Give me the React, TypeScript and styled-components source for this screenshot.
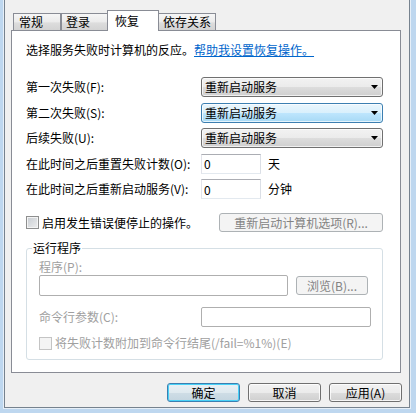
import React from 'react';
import styled, { createGlobalStyle, css } from 'styled-components';

const GlobalStyle = createGlobalStyle`
  html, body {
    margin: 0;
    padding: 0;
  }
  body {
    font: 12px "Noto Sans CJK SC", "Liberation Sans", sans-serif;
    color: #000;
    background: #bed7ef;
  }
`;

const tabs = [
  { label: '常规', width: 48, pad: 5 },
  { label: '登录', width: 47, pad: 4 },
  { label: '恢复', width: 52, pad: 7, active: true },
  { label: '依存关系', width: 58, pad: 4 },
];

const failures = [
  { label: '第一次失败(F):', value: '重新启动服务' },
  { label: '第二次失败(S):', value: '重新启动服务', focus: true },
  { label: '后续失败(U):', value: '重新启动服务' },
];

const Arrow = () => (
  <svg width="7" height="4" viewBox="0 0 7 4">
    <polygon points="0,0 7,0 3.5,4" fill="#000" />
  </svg>
);

export default function App() {
  return (
    <Frame>
      <GlobalStyle />
      <Dialog>
        <TabStrip>
          {tabs.map((t) => (
            <Tab key={t.label} $w={t.width} $pl={t.pad} $active={t.active}>
              {t.label}
            </Tab>
          ))}
        </TabStrip>
        <Panel>
          <Intro>
            选择服务失败时计算机的反应。<HelpLink href="#">帮助我设置恢复操作。</HelpLink>
          </Intro>

          <Form>
            {failures.map((f) => (
              <React.Fragment key={f.label}>
                <Label>{f.label}</Label>
                <Combo $focus={f.focus}>
                  <span>{f.value}</span>
                  <Arrow />
                </Combo>
              </React.Fragment>
            ))}
            <Label>在此时间之后重置失败计数(O):</Label>
            <Inline>
              <NumberBox readOnly value="0" />
              <Unit>天</Unit>
            </Inline>
            <Label>在此时间之后重新启动服务(V):</Label>
            <Inline>
              <NumberBox readOnly value="0" />
              <Unit>分钟</Unit>
            </Inline>
          </Form>

          <StopRow>
            <CheckLabel>
              <CheckBox />
              启用发生错误便停止的操作。
            </CheckLabel>
            <PushButton $w={164} disabled>
              重新启动计算机选项(R)...
            </PushButton>
          </StopRow>

          <Group>
            <Legend>运行程序</Legend>
            <Label $disabled>程序(P):</Label>
            <ProgramRow>
              <TextBox disabled $w={249} $h={21} />
              <PushButton $w={72} disabled>
                浏览(B)...
              </PushButton>
            </ProgramRow>
            <ParamRow>
              <Label $disabled>命令行参数(C):</Label>
              <TextBox disabled $h={20} />
            </ParamRow>
            <CheckLabel $disabled $inset>
              <CheckBox $disabled />
              将失败计数附加到命令行结尾(/fail=%1%)(E)
            </CheckLabel>
          </Group>
        </Panel>

        <ButtonBar>
          <PushButton $default>确定</PushButton>
          <PushButton>取消</PushButton>
          <PushButton>应用(A)</PushButton>
        </ButtonBar>
      </Dialog>
    </Frame>
  );
}

const Frame = styled.div`
  width: 416px;
  height: 413px;
  box-sizing: border-box;
  padding: 0 6px 5px 4px;
  background: #bed7ef;
`;

const Dialog = styled.div`
  height: 100%;
  box-sizing: border-box;
  background: #f0f0f0;
  border: 1px solid #76828e;
  border-top: 0;
  box-shadow: 0 0 0 1px #e6eff8;
  padding: 10px 0 5px;
  display: flex;
  flex-direction: column;
`;

const TabStrip = styled.div`
  display: flex;
  align-items: flex-end;
  height: 20px;
  margin-left: 8px;
`;

const Tab = styled.div<{ $w: number; $pl: number; $active?: boolean }>`
  box-sizing: border-box;
  width: ${({ $w }) => $w}px;
  height: 17px;
  padding-left: ${({ $pl }) => $pl}px;
  border: 1px solid #898c95;
  border-bottom: 0;
  line-height: 16px;
  white-space: nowrap;
  background: linear-gradient(#f6f6f6, #ebebeb 50%, #dddddd 55%, #d3d3d3);

  ${({ $active }) =>
    $active &&
    css`
      position: relative;
      z-index: 1;
      height: 21px;
      margin: 0 -1px -1px;
      padding-top: 2px;
      background: #fff;
    `}
`;

const Panel = styled.div`
  margin: 0 8px 0 6px;
  background: #fff;
  border: 1px solid #898c95;
  padding: 11px 17px 12px 14px;
`;

const Intro = styled.div`
  line-height: 16px;
  white-space: nowrap;
`;

const HelpLink = styled.a`
  color: #0066cc;
  text-decoration: underline;
`;

const Form = styled.div`
  margin-top: 19px;
  display: grid;
  grid-template-columns: 175px 182px;
  grid-auto-rows: 20px;
  row-gap: 5.5px;
  align-items: center;
`;

const Label = styled.div<{ $disabled?: boolean }>`
  line-height: 14px;
  white-space: nowrap;
  color: ${({ $disabled }) => ($disabled ? '#a0a0a0' : '#000')};
`;

const Combo = styled.div<{ $focus?: boolean }>`
  box-sizing: border-box;
  height: 20px;
  display: flex;
  align-items: center;
  justify-content: space-between;
  padding: 0 4px 0 3px;
  border: 1px solid #707070;
  border-radius: 3px;
  line-height: 18px;
  background: linear-gradient(#f2f2f2, #ebebeb 50%, #dddddd 50%, #cfcfcf);
  box-shadow: inset 0 0 0 1px rgba(255, 255, 255, 0.7);

  ${({ $focus }) =>
    $focus &&
    css`
      border-color: #3c7fb1;
      background: linear-gradient(#eaf6fd, #d9f0fc 50%, #bee6fd 50%, #a7d9f5);
    `}
`;

const Inline = styled.div`
  display: flex;
  align-items: center;
`;

const NumberBox = styled.input`
  box-sizing: border-box;
  width: 60px;
  height: 20px;
  margin: 0;
  padding: 0 2px;
  border: 1px solid;
  border-color: #abadb3 #dbdfe6 #e3e9ef #e2e3ea;
  font: inherit;
  line-height: 18px;
  outline: none;
  background: #fff;
`;

const Unit = styled.span`
  margin-left: 7px;
  line-height: 14px;
`;

const StopRow = styled.div`
  margin-top: 14px;
  height: 19px;
  display: flex;
  align-items: center;
  justify-content: space-between;
`;

const CheckLabel = styled.div<{ $disabled?: boolean; $inset?: boolean }>`
  display: flex;
  align-items: center;
  gap: 3px;
  height: 14px;
  line-height: 14px;
  white-space: nowrap;
  color: ${({ $disabled }) => ($disabled ? '#a0a0a0' : '#000')};
  margin-top: ${({ $inset }) => ($inset ? '9px' : '0')};
`;

const CheckBox = styled.span<{ $disabled?: boolean }>`
  flex: none;
  box-sizing: border-box;
  width: 13px;
  height: 13px;
  border: 1px solid ${({ $disabled }) => ($disabled ? '#c4c4c4' : '#8e8f8f')};
  box-shadow: inset 0 0 0 1px #f4f4f4;
  background: ${({ $disabled }) =>
    $disabled ? '#f4f4f4' : 'linear-gradient(135deg, #c7ccd2, #eeeeee)'};
`;

const PushButton = styled.button<{ $w?: number; $default?: boolean }>`
  box-sizing: border-box;
  width: ${({ $w }) => $w ?? 73}px;
  height: 19px;
  margin: 0;
  padding: 0;
  border: 1px solid #707070;
  border-radius: 3px;
  font: inherit;
  line-height: 17px;
  color: #000;
  white-space: nowrap;
  background: linear-gradient(#f2f2f2, #ebebeb 50%, #dddddd 50%, #cfcfcf);
  box-shadow: inset 0 0 0 1px rgba(255, 255, 255, 0.8);

  &:disabled {
    color: #838383;
    border-color: #adb2b5;
    background: #f4f4f4;
    box-shadow: none;
  }

  ${({ $default }) =>
    $default &&
    css`
      border-color: #3c7fb1;
      box-shadow: inset 0 0 0 1px #48d1f7;
      background: linear-gradient(#e9f1f5, #dfe9ef 50%, #cfdde6 50%, #c4d5e0);
    `}
`;

const Group = styled.fieldset`
  margin: 9px 0 0;
  padding: 5px 11px 9px 12px;
  min-width: 0;
  border: 1px solid #d5dfe5;
  border-radius: 3px;
`;

const Legend = styled.legend`
  margin-left: -7px;
  padding: 0 1px;
  line-height: 14px;
  color: #000;
`;

const ProgramRow = styled.div`
  margin-top: 1px;
  display: flex;
  align-items: center;
  gap: 8px;
`;

const TextBox = styled.input<{ $w?: number; $h: number }>`
  box-sizing: border-box;
  width: ${({ $w }) => ($w ? `${$w}px` : '100%')};
  height: ${({ $h }) => $h}px;
  margin: 0;
  padding: 0 2px;
  border: 1px solid #afafaf;
  border-radius: 2px;
  background: #fff;
  font: inherit;
`;

const ParamRow = styled.div`
  margin-top: 11px;
  display: grid;
  grid-template-columns: 162px 1fr;
  align-items: center;
  height: 20px;
`;

const ButtonBar = styled.div`
  margin-top: 10px;
  padding-right: 7px;
  display: flex;
  justify-content: flex-end;
  gap: 8px;
`;
